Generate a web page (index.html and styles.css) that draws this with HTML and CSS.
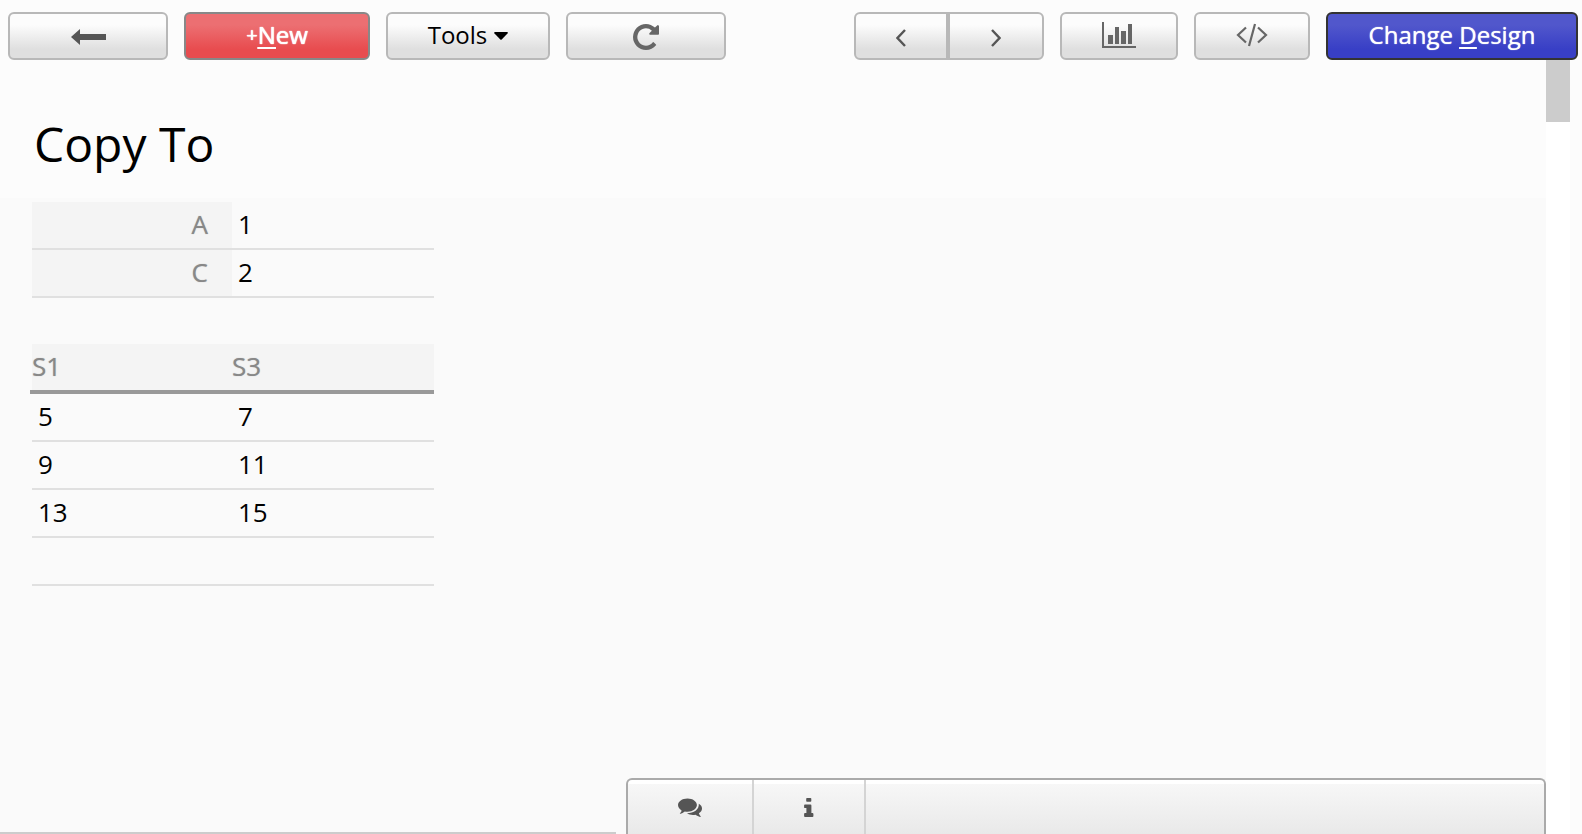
FILE: index.html
```html
<!DOCTYPE html>
<html lang="en">
<head>
<meta charset="utf-8">
<meta name="viewport" content="width=device-width, initial-scale=1">
<title>Copy To</title>
<link rel="stylesheet" href="styles.css">
</head>
<body>
<header class="toolbar">
  <div class="toolbar-group">
    <button type="button" class="btn btn-back" aria-label="Back">
      <svg width="36" height="16" viewBox="-1 0 36 16"><path d="M9 0v5h26v6H9v5L0 8z" fill="#555"/></svg>
    </button>
    <button type="button" class="btn btn-new"><span class="plus">+</span><u>N</u>ew</button>
    <button type="button" class="btn btn-tools">Tools
      <svg width="14" height="10" viewBox="0 -2 14 10"><path d="M1 0h12q1.500 0.300.500 1.500L7.700 7.500q-.700.600-1.400 0L.5 1.500Q-.3.300 1 0z" fill="#000"/></svg>
    </button>
    <button type="button" class="btn btn-refresh" aria-label="Refresh">
      <svg width="26" height="26" viewBox="0 128 1536 1536"><path d="M1536 256v448q0 26-19 45t-45 19h-448q-42 0-59-40-17-39 14-69l138-138q-148-137-349-137-104 0-198.500 40.500t-163.500 109.500-109.500 163.500-40.500 198.500 40.500 198.500 109.500 163.500 163.500 109.500 198.500 40.500q119 0 225-52t179-147q7-10 23-12 15 0 25 9l137 138q9 8 9.500 20.500t-7.500 22.500q-109 132-264 204.500t-327 72.500q-156 0-298-61t-245-164-164-245-61-298 61-298 164-245 245-164 298-61q147 0 284.500 55.500t244.500 156.500l130-129q29-31 70-14 39 17 39 59z" fill="#666"/></svg>
    </button>
  </div>
  <div class="toolbar-group">
    <div class="pager">
      <button type="button" class="btn btn-prev" aria-label="Previous">
        <svg width="10" height="18" viewBox="0 0 10 18"><path d="M9 1L1.500 9 9 17" fill="none" stroke="#555" stroke-width="2.400"/></svg>
      </button>
      <button type="button" class="btn btn-next" aria-label="Next">
        <svg width="10" height="18" viewBox="0 0 10 18"><path d="M1 1l7.500 8L1 17" fill="none" stroke="#555" stroke-width="2.400"/></svg>
      </button>
    </div>
    <button type="button" class="btn btn-chart" aria-label="Chart">
      <svg width="34" height="26" viewBox="0 0 34 26" fill="#666"><path d="M0 0h2v24h32v2H0zM6 13h5v9H6zM13 5h4v17h-4zM19 9h5v13h-5zM26 2h4v20h-4z"/></svg>
    </button>
    <button type="button" class="btn btn-code" aria-label="Code">
      <svg width="32" height="24" viewBox="0 0 32 24" fill="none" stroke="#666" stroke-width="2.200"><path d="M10 4.500L2 12l8 7.500M22 4.500l8 7.500-8 7.500M19 1l-6 22"/></svg>
    </button>
    <button type="button" class="btn btn-design"><span>Change <u>D</u>esign</span></button>
  </div>
</header>
<div class="workspace">
  <main class="page">
    <h1 class="title">Copy To</h1>
    <div class="content">
      <table class="fields">
        <tbody>
          <tr><th scope="row">A</th><td>1</td></tr>
          <tr><th scope="row">C</th><td>2</td></tr>
        </tbody>
      </table>
      <table class="records">
        <thead><tr><th scope="col">S1</th><th scope="col">S3</th></tr></thead>
        <tbody>
          <tr><td>5</td><td>7</td></tr>
          <tr><td>9</td><td>11</td></tr>
          <tr><td>13</td><td>15</td></tr>
          <tr><td></td><td></td></tr>
        </tbody>
      </table>
    </div>
    <footer class="dock">
      <div class="dock-track"></div>
      <div class="dock-panel">
        <button type="button" class="tab tab-chat" aria-label="Comments">
          <svg width="24" height="20" viewBox="0 0 24 20" fill="#555"><path d="M9.500.5c5.200 0 9.400 2.900 9.400 6.600s-4.200 6.700-9.400 6.700c-1 0-1.900-.1-2.700-.3-1.500 1.300-3 2-4.600 2.300-.4 0-.4-.4-.1-.7.900-.8 1.400-1.600 1.500-2.700C1.400 11.200 0 9.300 0 7.100 0 3.400 4.200.5 9.500.5z"/><path d="M20.800 5.800c2 1.200 3.200 2.800 3.200 4.700 0 2-1.200 3.600-3.100 4.700.2 1.200.9 2 1.600 2.800.4.500.2 1-.4.900-1.700-.3-3-1-4.600-2.100-3.300.6-6.400 0-8.500-1.500 6.700 0 12.300-3.700 11.800-9.500z"/></svg>
        </button>
        <button type="button" class="tab tab-info" aria-label="Information">
          <svg width="10" height="20" viewBox="0 1 10 20" fill="#555"><path d="M3 1h3.500q.8 0 .8.800V4q0 .8-.8.800H3q-.8 0-.8-.8V1.800Q2.200 1 3 1zM1 7.500h5.500q.9 0 .9.900v7.700h1.100q.9 0 .9.900v2q0 .9-.9.900H1q-.9 0-.9-.9v-2q0-.9.9-.9h1.400v-5H1q-.9 0-.9-.9V8.400q0-.9.9-.9z"/></svg>
        </button>
      </div>
    </footer>
  </main>
  <div class="scroll-track"><div class="scroll-thumb"></div></div>
</div>
</body>
</html>
```
FILE: styles.css
```css
* {
  box-sizing: border-box;
}

body {
  margin: 0;
  min-height: 100vh;
  display: flex;
  flex-direction: column;
  background: #fcfcfc;
  color: #000;
  font-family: "Open Sans", "Noto Sans", sans-serif;
  font-size: 26px;
}

svg {
  display: block;
  flex: none;
}

.toolbar {
  display: flex;
  justify-content: space-between;
  padding: 12px 4px 0 8px;
}

.toolbar-group {
  display: flex;
  gap: 16px;
}

.btn {
  display: flex;
  align-items: center;
  justify-content: center;
  height: 48px;
  padding: 0 0 2px;
  border: 2px solid #b8b8b8;
  border-radius: 6px;
  background: linear-gradient(#fcfcfc 25%, #dfdfdf 80%);
  color: #000;
  font: inherit;
  font-size: 24px;
  line-height: 32px;
}

.btn u {
  text-decoration-thickness: 2px;
  text-underline-offset: 3px;
}

.btn-back,
.btn-refresh {
  width: 160px;
  padding: 2px 0 0;
}

.btn-new {
  width: 186px;
  border-color: #888;
  background: linear-gradient(#ec6f72 25%, #e84c4f 80%);
  color: #fff;
  text-shadow: 0 0 1px #fff, 0 0 1px #fff;
}

.plus {
  font-size: 20px;
}

.btn-tools {
  width: 164px;
  gap: 7px;
}

.pager {
  display: flex;
}

.btn-prev,
.btn-next {
  padding: 4px 0 0;
}

.btn-prev {
  width: 94px;
  border-radius: 6px 0 0 6px;
}

.btn-next {
  width: 96px;
  border-radius: 0 6px 6px 0;
}

.btn-chart {
  width: 118px;
}

.btn-code {
  width: 116px;
}

.btn-design {
  width: 252px;
  border-color: #333;
  background: linear-gradient(#5157cc 25%, #383fc6 80%);
  color: #fff;
  text-shadow: 0 0 1px #fff;
}

.workspace {
  flex: 1;
  display: flex;
  padding-right: 12px;
}

.page {
  flex: 1;
  display: flex;
  flex-direction: column;
}

.title {
  margin: 0;
  padding: 51px 34px 21px;
  font-size: 48px;
  font-weight: 400;
  line-height: 66px;
}

.content {
  flex: 1;
  padding: 4px 30px;
  background: #fafafa;
}

table {
  table-layout: fixed;
  width: 402px;
  margin-left: 2px;
  border-collapse: separate;
  border-spacing: 0;
}

th,
td {
  height: 48px;
  padding: 0 6px 2px;
  border-bottom: 2px solid #e0e0e0;
  line-height: 36px;
  text-align: left;
}

th {
  background: #f4f4f4;
  color: #888;
  font-weight: 400;
  text-shadow: 0 0 1px #aaa;
}

th:first-child,
td:first-child {
  width: 200px;
}

.fields th {
  padding-right: 24px;
  text-align: right;
}

.records {
  width: 404px;
  margin: 46px 0 0;
}

.records thead th {
  height: 50px;
  padding: 0 0 2px;
  border-bottom: 4px solid #999;
}

.records th:first-child,
.records td:first-child {
  width: 202px;
}

.records thead th:first-child {
  padding-left: 2px;
  background: linear-gradient(#f4f4f4, #f4f4f4) 2px 0 no-repeat;
}

.records td:first-child {
  padding: 0 0 4px 8px;
  border-bottom: 0;
  background: linear-gradient(#e0e0e0, #e0e0e0) 2px 100% / 100% 2px no-repeat;
}

.dock {
  display: grid;
  grid-template-columns: 67fr 100fr;
  column-gap: 10px;
  align-items: end;
  background: #fafafa;
}

.dock-track {
  height: 2px;
  background: #ccc;
}

.dock-panel {
  display: flex;
  height: 56px;
  border: 2px solid #aaa;
  border-bottom: 0;
  border-radius: 6px 6px 0 0;
  background: linear-gradient(#fff 4px, #f7f7f7 4px, #e9e9e9);
}

.tab {
  display: flex;
  align-items: center;
  justify-content: center;
  padding: 2px 0 0;
  border: 0;
  border-right: 2px solid #d4d4d4;
  background: none;
}

.tab-chat {
  width: 126px;
}

.tab-info {
  width: 112px;
}

.scroll-track {
  width: 24px;
  background: #fff;
}

.scroll-thumb {
  height: 62px;
  background: #ccc;
}
```
